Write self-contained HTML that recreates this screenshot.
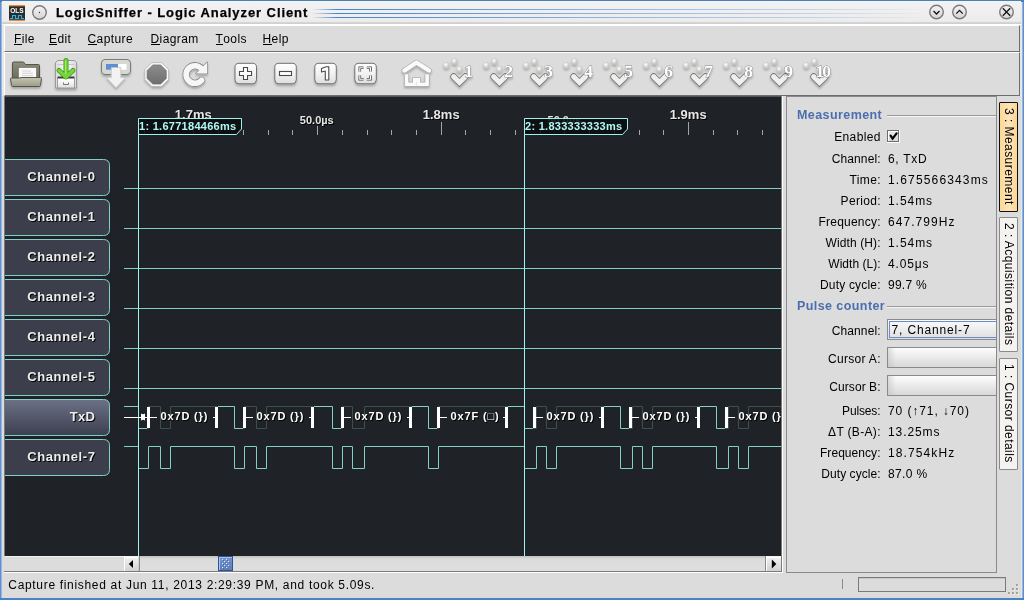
<!DOCTYPE html><html><head><meta charset="utf-8"><style>
*{margin:0;padding:0;box-sizing:border-box}
html,body{width:1024px;height:600px;overflow:hidden;background:#dcdcdc;font-family:"Liberation Sans",sans-serif;}
.a{position:absolute}
.t{position:absolute;white-space:nowrap;line-height:1}
svg text{font-family:"Liberation Sans",sans-serif}
#frame{left:0;top:0;width:1024px;height:600px;background:linear-gradient(to right,#4a7cc0 0,#a8c8ec 1.9px,#e8e8e8 2.2px,#e8e8e8 1021.6px,#a8c8ec 1022px,#4a7cc0 1024px)}
#fbot{left:0;top:598px;width:1024px;height:2px;background:#4a82c6}
#ftop{left:0;top:0;width:1024px;height:1.5px;background:#4a80b8}
#titlebar{left:2px;top:1px;width:1019px;height:24px;background:linear-gradient(#f2f2f2,#ececec 85%,#cfcfcf 91%,#cfcfcf 95.8%,#fff 96%)}
#menubar{left:4px;top:25px;width:1016px;height:27px;background:#dcdcdc;border-top:1px solid #fff;border-left:1px solid #fff;border-right:1px solid #6e6e6e;border-bottom:1px solid #6e6e6e}
#toolbar{left:4px;top:52px;width:1016px;height:44px;background:#dcdcdc;border-top:1px solid #fff;border-left:1px solid #fff;border-right:1px solid #6e6e6e;border-bottom:1px solid #6e6e6e}
#body{left:2px;top:96px;width:1019px;height:502px;background:#dcdcdc}
.menu{font-size:12px;color:#000;top:33px;letter-spacing:0.4px}
.menu u{text-decoration:none;display:inline-block;border-bottom:1px solid #000;line-height:10px;height:11px}
.plab{font-size:12px;color:#000;letter-spacing:0.3px}
.pval{font-size:12px;color:#000;letter-spacing:0.6px}

.cl{font:bold 13px "Liberation Sans",sans-serif;letter-spacing:0.6px}
.rl{font:bold 13px "Liberation Sans",sans-serif}
.rs{font:bold 11px "Liberation Sans",sans-serif}
.an{font:bold 11px "Liberation Sans",sans-serif;letter-spacing:0.85px}
.cu{font:bold 11px "Liberation Sans",sans-serif;letter-spacing:0.28px}
</style></head><body><div id="wrap" style="position:absolute;left:0;top:0;width:1024px;height:600px;will-change:transform">
<div id="frame" class="a"></div><div id="ftop" class="a"></div>
<div id="titlebar" class="a"></div>
<svg class="a" style="left:0;top:0" width="1024" height="25" viewBox="0 0 1024 25">
<defs><linearGradient id="btng" x1="0" y1="0" x2="0" y2="1"><stop offset="0" stop-color="#f4f4f4"/><stop offset="1" stop-color="#d4d4d4"/></linearGradient><linearGradient id="bl" x1="0" x2="1"><stop offset="0" stop-color="#3a7ed0" stop-opacity="0"/><stop offset="0.04" stop-color="#3a7ed0" stop-opacity="0.95"/><stop offset="0.5" stop-color="#3a7ed0" stop-opacity="0.5"/><stop offset="0.8" stop-color="#3a7ed0" stop-opacity="0.25"/><stop offset="1" stop-color="#3a7ed0" stop-opacity="0"/></linearGradient></defs>
<rect x="9" y="5" width="16" height="16" fill="#2b2b2b"/>
<rect x="9" y="5" width="16" height="1.3" fill="#f08a30"/><rect x="9" y="19.7" width="16" height="1.3" fill="#f08a30"/>
<text x="17" y="13" text-anchor="middle" style="font:bold 6.5px 'Liberation Sans',sans-serif" fill="#fff">OLS</text>
<path d="M10,18.5 H12.5 V15.5 H15.5 V18.5 H18.5 V15.5 H21.5 V18.5 H24" stroke="#19b8f0" stroke-width="1.2" fill="none"/>
<circle cx="39.5" cy="12.5" r="7.6" fill="#fff" opacity="0.6"/><circle cx="39.5" cy="12.5" r="6.8" fill="url(#btng)" stroke="#7a7a7a" stroke-width="1.4"/>
<circle cx="39.5" cy="12.5" r="0.7" fill="#333"/>
<rect x="312" y="9.0" width="620" height="1" fill="url(#bl)"/>
<rect x="312" y="13.0" width="620" height="1" fill="url(#bl)"/>
<rect x="312" y="17.0" width="620" height="1" fill="url(#bl)"/>
<circle cx="936.5" cy="12" r="7.6" fill="#fff" opacity="0.6"/><circle cx="936.5" cy="12" r="6.8" fill="url(#btng)" stroke="#7a7a7a" stroke-width="1.4"/>
<circle cx="959.5" cy="12" r="7.6" fill="#fff" opacity="0.6"/><circle cx="959.5" cy="12" r="6.8" fill="url(#btng)" stroke="#7a7a7a" stroke-width="1.4"/>
<circle cx="1006.5" cy="12" r="7.6" fill="#fff" opacity="0.6"/><circle cx="1006.5" cy="12" r="6.8" fill="url(#btng)" stroke="#7a7a7a" stroke-width="1.4"/>
<path d="M933.5,11 L936.5,14 L939.5,11" stroke="#111" stroke-width="1.3" fill="none"/>
<path d="M956.3,13.6 L959.5,10.4 L962.7,13.6" stroke="#111" stroke-width="1.3" fill="none"/>
<path d="M1002.8,8.3 L1010.2,15.7 M1010.2,8.3 L1002.8,15.7" stroke="#111" stroke-width="1.3" fill="none"/>
</svg>
<div class="t" style="left:56px;top:6px;font-size:13px;font-weight:bold;letter-spacing:0.92px;color:#000;-webkit-text-stroke:0.25px #000">LogicSniffer - Logic Analyzer Client</div>
<div id="menubar" class="a"></div>
<div class="t menu" style="left:14px"><u>F</u>ile</div>
<div class="t menu" style="left:49px"><u>E</u>dit</div>
<div class="t menu" style="left:87.5px"><u>C</u>apture</div>
<div class="t menu" style="left:150.5px"><u>D</u>iagram</div>
<div class="t menu" style="left:215.5px"><u>T</u>ools</div>
<div class="t menu" style="left:262.5px"><u>H</u>elp</div>
<div id="toolbar" class="a"></div>
<svg class="a" style="left:0;top:52px" width="1024" height="44" viewBox="0 52 1024 44">
<defs>
<linearGradient id="fbk" x1="0" y1="0" x2="0" y2="1"><stop offset="0" stop-color="#8e8e7c"/><stop offset="1" stop-color="#6a6a5a"/></linearGradient>
<linearGradient id="ffr" x1="0" y1="0" x2="0" y2="1"><stop offset="0" stop-color="#c4c4b2"/><stop offset="1" stop-color="#9c9c88"/></linearGradient>
<linearGradient id="btn" x1="0" y1="0" x2="0" y2="1"><stop offset="0" stop-color="#ffffff"/><stop offset="0.5" stop-color="#f2f2f2"/><stop offset="1" stop-color="#dedede"/></linearGradient>
<linearGradient id="oct" x1="0" y1="0" x2="0" y2="1"><stop offset="0" stop-color="#8c8c8c"/><stop offset="1" stop-color="#6e6e6e"/></linearGradient>
<linearGradient id="cab" x1="0" y1="0" x2="1" y2="0"><stop offset="0" stop-color="#dadada"/><stop offset="0.5" stop-color="#fbfbfb"/><stop offset="1" stop-color="#d8d8d8"/></linearGradient>
<radialGradient id="dot" cx="0.4" cy="0.35" r="0.7"><stop offset="0" stop-color="#ffffff"/><stop offset="1" stop-color="#b8b8b2"/></radialGradient>
<filter id="sh" x="-20%" y="-20%" width="140%" height="160%"><feGaussianBlur in="SourceAlpha" stdDeviation="1"/><feOffset dy="1.5"/><feComponentTransfer><feFuncA type="linear" slope="0.25"/></feComponentTransfer><feMerge><feMergeNode/><feMergeNode in="SourceGraphic"/></feMerge></filter>
</defs>
<g filter="url(#sh)">
<path d="M12.5,63 Q12.5,62 13.5,62 H23.5 L25.5,64.5 H38.5 Q39.5,64.5 39.5,65.5 V80 H12.5 Z" fill="url(#fbk)" stroke="#55554a" stroke-width="1"/>
<rect x="18.5" y="67.5" width="18" height="11" fill="#fafafa" stroke="#6a6a60" stroke-width="0.6"/>
<path d="M22,71 H31 M22,73.3 H33 M22,75.6 H33" stroke="#c8c8c8" stroke-width="0.8"/>
<path d="M10.5,79 Q10.5,78 11.5,78 H20 L21,77.5 H40.5 Q41.5,77.5 41.5,78.5 L40.5,85.5 Q40.3,86.5 39.3,86.5 H12.7 Q11.7,86.5 11.5,85.5 Z" fill="url(#ffr)" stroke="#55554a" stroke-width="1"/>
</g>
<g filter="url(#sh)">
<path d="M57.5,60.5 H74.5 L76.5,62.5 V88 H55.5 V62.5 Z" fill="url(#cab)" stroke="#9a9a9a" stroke-width="1"/>
<path d="M57.5,64.5 H74.5 M57.5,72 H74.5" stroke="#c8c8c8" stroke-width="1"/>
<rect x="57.5" y="76.5" width="17" height="1.6" fill="#3a3a3a"/>
<rect x="57.5" y="78.5" width="17" height="9.5" fill="url(#btn)" stroke="#8a8a8a" stroke-width="0.8"/>
<path d="M63.5,82.5 V84.5 H68.5 V82.5" stroke="#777" stroke-width="1" fill="none"/>
<path d="M66,60.5 V75.5 M59,70.5 L66,77 L73,70.5" stroke="#3f9a15" stroke-width="5" stroke-linecap="round" stroke-linejoin="round" fill="none"/>
<path d="M66,60.5 V75.5 M59,70.5 L66,77 L73,70.5" stroke="#77d43a" stroke-width="3.4" stroke-linecap="round" stroke-linejoin="round" fill="none"/>
<path d="M65.6,61 V74" stroke="#b8f090" stroke-width="0.8"/>
</g>
<g filter="url(#sh)">
<rect x="101.5" y="59.5" width="29" height="15" rx="3.5" fill="#d6d8d2" stroke="#7a7a7a" stroke-width="1"/>
<rect x="106" y="64" width="20.5" height="5.8" fill="#fff"/>
<rect x="106" y="64" width="12" height="5.8" fill="#5d8fd2"/>
<path d="M111.3,67.5 H120.8 V77.5 H125.6 L116,87.7 L106.4,77.5 H111.3 Z" fill="#f2f2f2" stroke="#c4c4c4" stroke-width="0.8"/>
</g>
<g filter="url(#sh)">
<polygon points="168.53,79.40 161.60,86.33 151.80,86.33 144.87,79.40 144.87,69.60 151.80,62.67 161.60,62.67 168.53,69.60" fill="#fbfbfb" stroke="#b4b4b4" stroke-width="0.8"/>
<polygon points="166.31,78.48 160.68,84.11 152.72,84.11 147.09,78.48 147.09,70.52 152.72,64.89 160.68,64.89 166.31,70.52" fill="url(#oct)" stroke="#6a6a6a" stroke-width="0.6"/>
</g>
<g filter="url(#sh)">
<path d="M201.6,68.8 A8.8,8.8 0 1 0 201.6,80.2" stroke="#8a8a8a" stroke-width="7.2" fill="none" stroke-linecap="round"/>
<path d="M207.2,62.3 V73.5 H196 Z" fill="#8a8a8a" stroke="#8a8a8a" stroke-width="1.4" stroke-linejoin="round"/>
<path d="M201.6,68.8 A8.8,8.8 0 1 0 201.6,80.2" stroke="#f6f6f6" stroke-width="5.6" fill="none" stroke-linecap="round"/>
<path d="M207.2,62.3 V73.5 H196 Z" fill="#f6f6f6" stroke="none"/>
</g>
<g filter="url(#sh)">
<rect x="235.0" y="63.3" width="21.5" height="20.5" rx="4" fill="url(#btn)" stroke="#6e6e6e" stroke-width="1"/>
<path d="M243.5,67.5 H247.5 V71.5 H251.5 V75.5 H247.5 V79.5 H243.5 V75.5 H239.5 V71.5 H243.5 Z" fill="#fff" stroke="#4a4a4a" stroke-width="1.1"/>
<rect x="274.8" y="63.3" width="21.5" height="20.5" rx="4" fill="url(#btn)" stroke="#6e6e6e" stroke-width="1"/>
<rect x="279.5" y="71.5" width="12" height="4" fill="#fff" stroke="#4a4a4a" stroke-width="1.1"/>
<rect x="314.8" y="63.3" width="21.5" height="20.5" rx="4" fill="url(#btn)" stroke="#6e6e6e" stroke-width="1"/>
<path d="M321.5,68.5 L326.3,66.8 H328.8 V80 H325.3 V71 L321.5,72 Z" fill="#fff" stroke="#4a4a4a" stroke-width="1.1" stroke-linejoin="round"/>
<rect x="354.8" y="63.3" width="21.5" height="20.5" rx="4" fill="url(#btn)" stroke="#6e6e6e" stroke-width="1"/>
<path d="M359.8,71.5 V67.8 H363.5 M366.8,67.8 H370.5 V71.5 M370.5,75.5 V79.2 H366.8 M363.5,79.2 H359.8 V75.5" stroke="#4a4a4a" stroke-width="2.6" fill="none"/>
<path d="M359.8,71.5 V67.8 H363.5 M366.8,67.8 H370.5 V71.5 M370.5,75.5 V79.2 H366.8 M363.5,79.2 H359.8 V75.5" stroke="#fff" stroke-width="1.1" fill="none"/>
</g>
<g filter="url(#sh)">
<path d="M404.5,70.5 L416.4,62.5 L429,70.5" stroke="#a8a8a8" stroke-width="5.6" stroke-linecap="round" stroke-linejoin="round" fill="none"/>
<path d="M404.5,70.5 L416.4,62.5 L429,70.5" stroke="#fafafa" stroke-width="4.4" stroke-linecap="round" stroke-linejoin="round" fill="none"/>
<path d="M406.6,74.2 V84.2 H414.6 V79.8 H418.4 V84.2 H427.1 V74.2" stroke="#a0a0a0" stroke-width="4.8" fill="none" stroke-linejoin="miter"/>
<path d="M406.6,74.2 V84.2 H414.6 V79.8 H418.4 V84.2 H427.1 V74.2" stroke="#fafafa" stroke-width="3.6" fill="none" stroke-linejoin="miter"/>
</g>
<g filter="url(#sh)">
<circle cx="446.35" cy="65.35" r="3" fill="url(#dot)" stroke="#c8c8c0" stroke-width="0.5"/>
<circle cx="454.45" cy="61.4" r="3" fill="url(#dot)" stroke="#c8c8c0" stroke-width="0.5"/>
<circle cx="459.55" cy="69.3" r="3" fill="url(#dot)" stroke="#c8c8c0" stroke-width="0.5"/>
<path d="M453.6,76.6 L459.5,82.5 L465.4,76.6" stroke="#707070" stroke-width="6.6" stroke-linejoin="miter" stroke-linecap="round" fill="none"/>
<path d="M453.6,76.6 L459.5,82.5 L465.4,76.6" stroke="#efefef" stroke-width="5.1" stroke-linejoin="miter" stroke-linecap="round" fill="none"/>
<text x="467.7" y="77.3" text-anchor="middle" style="font:bold 17.5px 'Liberation Serif',serif;letter-spacing:-2px" fill="#fff" stroke="#8a8a8a" stroke-width="0.9" paint-order="stroke">1</text>
</g>
<g filter="url(#sh)">
<circle cx="486.35" cy="65.35" r="3" fill="url(#dot)" stroke="#c8c8c0" stroke-width="0.5"/>
<circle cx="494.45" cy="61.4" r="3" fill="url(#dot)" stroke="#c8c8c0" stroke-width="0.5"/>
<circle cx="499.55" cy="69.3" r="3" fill="url(#dot)" stroke="#c8c8c0" stroke-width="0.5"/>
<path d="M493.6,76.6 L499.5,82.5 L505.4,76.6" stroke="#707070" stroke-width="6.6" stroke-linejoin="miter" stroke-linecap="round" fill="none"/>
<path d="M493.6,76.6 L499.5,82.5 L505.4,76.6" stroke="#efefef" stroke-width="5.1" stroke-linejoin="miter" stroke-linecap="round" fill="none"/>
<text x="507.7" y="77.3" text-anchor="middle" style="font:bold 17.5px 'Liberation Serif',serif;letter-spacing:-2px" fill="#fff" stroke="#8a8a8a" stroke-width="0.9" paint-order="stroke">2</text>
</g>
<g filter="url(#sh)">
<circle cx="526.35" cy="65.35" r="3" fill="url(#dot)" stroke="#c8c8c0" stroke-width="0.5"/>
<circle cx="534.45" cy="61.4" r="3" fill="url(#dot)" stroke="#c8c8c0" stroke-width="0.5"/>
<circle cx="539.55" cy="69.3" r="3" fill="url(#dot)" stroke="#c8c8c0" stroke-width="0.5"/>
<path d="M533.6,76.6 L539.5,82.5 L545.4,76.6" stroke="#707070" stroke-width="6.6" stroke-linejoin="miter" stroke-linecap="round" fill="none"/>
<path d="M533.6,76.6 L539.5,82.5 L545.4,76.6" stroke="#efefef" stroke-width="5.1" stroke-linejoin="miter" stroke-linecap="round" fill="none"/>
<text x="547.7" y="77.3" text-anchor="middle" style="font:bold 17.5px 'Liberation Serif',serif;letter-spacing:-2px" fill="#fff" stroke="#8a8a8a" stroke-width="0.9" paint-order="stroke">3</text>
</g>
<g filter="url(#sh)">
<circle cx="566.35" cy="65.35" r="3" fill="url(#dot)" stroke="#c8c8c0" stroke-width="0.5"/>
<circle cx="574.45" cy="61.4" r="3" fill="url(#dot)" stroke="#c8c8c0" stroke-width="0.5"/>
<circle cx="579.55" cy="69.3" r="3" fill="url(#dot)" stroke="#c8c8c0" stroke-width="0.5"/>
<path d="M573.6,76.6 L579.5,82.5 L585.4,76.6" stroke="#707070" stroke-width="6.6" stroke-linejoin="miter" stroke-linecap="round" fill="none"/>
<path d="M573.6,76.6 L579.5,82.5 L585.4,76.6" stroke="#efefef" stroke-width="5.1" stroke-linejoin="miter" stroke-linecap="round" fill="none"/>
<text x="587.7" y="77.3" text-anchor="middle" style="font:bold 17.5px 'Liberation Serif',serif;letter-spacing:-2px" fill="#fff" stroke="#8a8a8a" stroke-width="0.9" paint-order="stroke">4</text>
</g>
<g filter="url(#sh)">
<circle cx="606.35" cy="65.35" r="3" fill="url(#dot)" stroke="#c8c8c0" stroke-width="0.5"/>
<circle cx="614.45" cy="61.4" r="3" fill="url(#dot)" stroke="#c8c8c0" stroke-width="0.5"/>
<circle cx="619.55" cy="69.3" r="3" fill="url(#dot)" stroke="#c8c8c0" stroke-width="0.5"/>
<path d="M613.6,76.6 L619.5,82.5 L625.4,76.6" stroke="#707070" stroke-width="6.6" stroke-linejoin="miter" stroke-linecap="round" fill="none"/>
<path d="M613.6,76.6 L619.5,82.5 L625.4,76.6" stroke="#efefef" stroke-width="5.1" stroke-linejoin="miter" stroke-linecap="round" fill="none"/>
<text x="627.7" y="77.3" text-anchor="middle" style="font:bold 17.5px 'Liberation Serif',serif;letter-spacing:-2px" fill="#fff" stroke="#8a8a8a" stroke-width="0.9" paint-order="stroke">5</text>
</g>
<g filter="url(#sh)">
<circle cx="646.35" cy="65.35" r="3" fill="url(#dot)" stroke="#c8c8c0" stroke-width="0.5"/>
<circle cx="654.45" cy="61.4" r="3" fill="url(#dot)" stroke="#c8c8c0" stroke-width="0.5"/>
<circle cx="659.55" cy="69.3" r="3" fill="url(#dot)" stroke="#c8c8c0" stroke-width="0.5"/>
<path d="M653.6,76.6 L659.5,82.5 L665.4,76.6" stroke="#707070" stroke-width="6.6" stroke-linejoin="miter" stroke-linecap="round" fill="none"/>
<path d="M653.6,76.6 L659.5,82.5 L665.4,76.6" stroke="#efefef" stroke-width="5.1" stroke-linejoin="miter" stroke-linecap="round" fill="none"/>
<text x="667.7" y="77.3" text-anchor="middle" style="font:bold 17.5px 'Liberation Serif',serif;letter-spacing:-2px" fill="#fff" stroke="#8a8a8a" stroke-width="0.9" paint-order="stroke">6</text>
</g>
<g filter="url(#sh)">
<circle cx="686.35" cy="65.35" r="3" fill="url(#dot)" stroke="#c8c8c0" stroke-width="0.5"/>
<circle cx="694.45" cy="61.4" r="3" fill="url(#dot)" stroke="#c8c8c0" stroke-width="0.5"/>
<circle cx="699.55" cy="69.3" r="3" fill="url(#dot)" stroke="#c8c8c0" stroke-width="0.5"/>
<path d="M693.6,76.6 L699.5,82.5 L705.4,76.6" stroke="#707070" stroke-width="6.6" stroke-linejoin="miter" stroke-linecap="round" fill="none"/>
<path d="M693.6,76.6 L699.5,82.5 L705.4,76.6" stroke="#efefef" stroke-width="5.1" stroke-linejoin="miter" stroke-linecap="round" fill="none"/>
<text x="707.7" y="77.3" text-anchor="middle" style="font:bold 17.5px 'Liberation Serif',serif;letter-spacing:-2px" fill="#fff" stroke="#8a8a8a" stroke-width="0.9" paint-order="stroke">7</text>
</g>
<g filter="url(#sh)">
<circle cx="726.35" cy="65.35" r="3" fill="url(#dot)" stroke="#c8c8c0" stroke-width="0.5"/>
<circle cx="734.45" cy="61.4" r="3" fill="url(#dot)" stroke="#c8c8c0" stroke-width="0.5"/>
<circle cx="739.55" cy="69.3" r="3" fill="url(#dot)" stroke="#c8c8c0" stroke-width="0.5"/>
<path d="M733.6,76.6 L739.5,82.5 L745.4,76.6" stroke="#707070" stroke-width="6.6" stroke-linejoin="miter" stroke-linecap="round" fill="none"/>
<path d="M733.6,76.6 L739.5,82.5 L745.4,76.6" stroke="#efefef" stroke-width="5.1" stroke-linejoin="miter" stroke-linecap="round" fill="none"/>
<text x="747.7" y="77.3" text-anchor="middle" style="font:bold 17.5px 'Liberation Serif',serif;letter-spacing:-2px" fill="#fff" stroke="#8a8a8a" stroke-width="0.9" paint-order="stroke">8</text>
</g>
<g filter="url(#sh)">
<circle cx="766.35" cy="65.35" r="3" fill="url(#dot)" stroke="#c8c8c0" stroke-width="0.5"/>
<circle cx="774.45" cy="61.4" r="3" fill="url(#dot)" stroke="#c8c8c0" stroke-width="0.5"/>
<circle cx="779.55" cy="69.3" r="3" fill="url(#dot)" stroke="#c8c8c0" stroke-width="0.5"/>
<path d="M773.6,76.6 L779.5,82.5 L785.4,76.6" stroke="#707070" stroke-width="6.6" stroke-linejoin="miter" stroke-linecap="round" fill="none"/>
<path d="M773.6,76.6 L779.5,82.5 L785.4,76.6" stroke="#efefef" stroke-width="5.1" stroke-linejoin="miter" stroke-linecap="round" fill="none"/>
<text x="787.7" y="77.3" text-anchor="middle" style="font:bold 17.5px 'Liberation Serif',serif;letter-spacing:-2px" fill="#fff" stroke="#8a8a8a" stroke-width="0.9" paint-order="stroke">9</text>
</g>
<g filter="url(#sh)">
<circle cx="806.35" cy="65.35" r="3" fill="url(#dot)" stroke="#c8c8c0" stroke-width="0.5"/>
<circle cx="814.45" cy="61.4" r="3" fill="url(#dot)" stroke="#c8c8c0" stroke-width="0.5"/>
<circle cx="819.55" cy="69.3" r="3" fill="url(#dot)" stroke="#c8c8c0" stroke-width="0.5"/>
<path d="M813.6,76.6 L819.5,82.5 L825.4,76.6" stroke="#707070" stroke-width="6.6" stroke-linejoin="miter" stroke-linecap="round" fill="none"/>
<path d="M813.6,76.6 L819.5,82.5 L825.4,76.6" stroke="#efefef" stroke-width="5.1" stroke-linejoin="miter" stroke-linecap="round" fill="none"/>
<text x="822.2" y="77.3" text-anchor="middle" style="font:bold 17.5px 'Liberation Serif',serif;letter-spacing:-2px" fill="#fff" stroke="#8a8a8a" stroke-width="0.9" paint-order="stroke">10</text>
</g>
</svg>
<div id="body" class="a"></div>
<div class="a" style="left:4px;top:96px;width:778px;height:1px;background:#555"></div>
<div class="a" style="left:4px;top:96px;width:1px;height:476px;background:#7a7a7a"></div>
<svg class="a" style="left:5px;top:97px" width="776" height="459" viewBox="5 97 776 459">
<defs><linearGradient id="selg" x1="0" y1="0" x2="0" y2="1"><stop offset="0" stop-color="#6c7186"/><stop offset="1" stop-color="#3c3f4e"/></linearGradient><clipPath id="bright"><rect x="100" y="390" width="47" height="50"/><rect x="218" y="390" width="25" height="50"/><rect x="314" y="390" width="27" height="50"/><rect x="412" y="390" width="25" height="50"/><rect x="508" y="390" width="25" height="50"/><rect x="604" y="390" width="25" height="50"/><rect x="700" y="390" width="25" height="50"/></clipPath></defs>
<rect x="5" y="97" width="776" height="459" fill="#1f2226"/>
<path d="M144.5,130 V135 M169.5,130 V135 M193.5,122 V135 M218.5,130 V135 M243.5,130 V135 M268.5,130 V135 M292.5,130 V135 M317.5,126 V135 M342.5,130 V135 M367.5,130 V135 M391.5,130 V135 M416.5,130 V135 M441.5,122 V135 M465.5,130 V135 M490.5,130 V135 M515.5,130 V135 M540.5,130 V135 M564.5,126 V135 M589.5,130 V135 M614.5,130 V135 M639.5,130 V135 M663.5,130 V135 M688.5,122 V135 M713.5,130 V135 M737.5,130 V135 M762.5,130 V135" stroke="#a4a4a4" stroke-width="1" fill="none"/>
<text x="194.3" y="119.5" text-anchor="middle" class="rl" fill="#000">1.7ms</text>
<text x="193.3" y="118.5" text-anchor="middle" class="rl" fill="#e6e6e6">1.7ms</text>
<text x="442.2" y="119.5" text-anchor="middle" class="rl" fill="#000">1.8ms</text>
<text x="441.2" y="118.5" text-anchor="middle" class="rl" fill="#e6e6e6">1.8ms</text>
<text x="689.2" y="119.5" text-anchor="middle" class="rl" fill="#000">1.9ms</text>
<text x="688.2" y="118.5" text-anchor="middle" class="rl" fill="#e6e6e6">1.9ms</text>
<text x="317.8" y="124.7" text-anchor="middle" class="rs" fill="#000">50.0µs</text>
<text x="316.8" y="123.7" text-anchor="middle" class="rs" fill="#e6e6e6">50.0µs</text>
<text x="565.5" y="124.7" text-anchor="middle" class="rs" fill="#000">50.0µs</text>
<text x="564.5" y="123.7" text-anchor="middle" class="rs" fill="#e6e6e6">50.0µs</text>
<path d="M-2,159.5 H103.5 Q109.5,159.5 109.5,165.5 V189.5 Q109.5,195.5 103.5,195.5 H-2 Z" fill="#3c3e4b" stroke="#7fd0c6" stroke-width="1"/><text x="96.5" y="182" text-anchor="end" class="cl" fill="#000">Channel-0</text><text x="95.5" y="181" text-anchor="end" class="cl" fill="#eeeeee">Channel-0</text>
<path d="M-2,199.5 H103.5 Q109.5,199.5 109.5,205.5 V229.5 Q109.5,235.5 103.5,235.5 H-2 Z" fill="#3c3e4b" stroke="#7fd0c6" stroke-width="1"/><text x="96.5" y="222" text-anchor="end" class="cl" fill="#000">Channel-1</text><text x="95.5" y="221" text-anchor="end" class="cl" fill="#eeeeee">Channel-1</text>
<path d="M-2,239.5 H103.5 Q109.5,239.5 109.5,245.5 V269.5 Q109.5,275.5 103.5,275.5 H-2 Z" fill="#3c3e4b" stroke="#7fd0c6" stroke-width="1"/><text x="96.5" y="262" text-anchor="end" class="cl" fill="#000">Channel-2</text><text x="95.5" y="261" text-anchor="end" class="cl" fill="#eeeeee">Channel-2</text>
<path d="M-2,279.5 H103.5 Q109.5,279.5 109.5,285.5 V309.5 Q109.5,315.5 103.5,315.5 H-2 Z" fill="#3c3e4b" stroke="#7fd0c6" stroke-width="1"/><text x="96.5" y="302" text-anchor="end" class="cl" fill="#000">Channel-3</text><text x="95.5" y="301" text-anchor="end" class="cl" fill="#eeeeee">Channel-3</text>
<path d="M-2,319.5 H103.5 Q109.5,319.5 109.5,325.5 V349.5 Q109.5,355.5 103.5,355.5 H-2 Z" fill="#3c3e4b" stroke="#7fd0c6" stroke-width="1"/><text x="96.5" y="342" text-anchor="end" class="cl" fill="#000">Channel-4</text><text x="95.5" y="341" text-anchor="end" class="cl" fill="#eeeeee">Channel-4</text>
<path d="M-2,359.5 H103.5 Q109.5,359.5 109.5,365.5 V389.5 Q109.5,395.5 103.5,395.5 H-2 Z" fill="#3c3e4b" stroke="#7fd0c6" stroke-width="1"/><text x="96.5" y="382" text-anchor="end" class="cl" fill="#000">Channel-5</text><text x="95.5" y="381" text-anchor="end" class="cl" fill="#eeeeee">Channel-5</text>
<path d="M-2,399.5 H103.5 Q109.5,399.5 109.5,405.5 V429.5 Q109.5,435.5 103.5,435.5 H-2 Z" fill="url(#selg)" stroke="#7fd0c6" stroke-width="1"/><text x="96" y="422" text-anchor="end" class="cl" fill="#000" style="letter-spacing:0.2px">TxD</text><text x="95" y="421" text-anchor="end" class="cl" fill="#eeeeee" style="letter-spacing:0.2px">TxD</text>
<path d="M-2,439.5 H103.5 Q109.5,439.5 109.5,445.5 V469.5 Q109.5,475.5 103.5,475.5 H-2 Z" fill="#3c3e4b" stroke="#7fd0c6" stroke-width="1"/><text x="96.5" y="462" text-anchor="end" class="cl" fill="#000">Channel-7</text><text x="95.5" y="461" text-anchor="end" class="cl" fill="#eeeeee">Channel-7</text>
<path d="M124,188.5 H781" stroke="#7fd0c6" stroke-width="1"/>
<path d="M124,228.5 H781" stroke="#7fd0c6" stroke-width="1"/>
<path d="M124,268.5 H781" stroke="#7fd0c6" stroke-width="1"/>
<path d="M124,308.5 H781" stroke="#7fd0c6" stroke-width="1"/>
<path d="M124,348.5 H781" stroke="#7fd0c6" stroke-width="1"/>
<path d="M124,388.5 H781" stroke="#7fd0c6" stroke-width="1"/>
<path d="M124,446.5 H138.5 V468.5 H148.5 V446.5 H160.5 V468.5 H170.5 V446.5 H234.5 V468.5 H244.5 V446.5 H256.5 V468.5 H266.5 V446.5 H332.5 V468.5 H342.5 V446.5 H352.5 V468.5 H364.5 V446.5 H428.5 V468.5 H438.5 V446.5 H524.5 V468.5 H536.5 V446.5 H546.5 V468.5 H556.5 V446.5 H620.5 V468.5 H632.5 V446.5 H642.5 V468.5 H652.5 V446.5 H716.5 V468.5 H728.5 V446.5 H738.5 V468.5 H748.5 V446.5 H781" stroke="#7fd0c6" fill="none" stroke-width="1"/>
<path d="M124,406.5 H138.5 V428.5 H148.5 V406.5 H160.5 V428.5 H170.5 V406.5 H234.5 V428.5 H244.5 V406.5 H256.5 V428.5 H266.5 V406.5 H332.5 V428.5 H342.5 V406.5 H352.5 V428.5 H364.5 V406.5 H428.5 V428.5 H438.5 V406.5 H524.5 V428.5 H536.5 V406.5 H546.5 V428.5 H556.5 V406.5 H620.5 V428.5 H632.5 V406.5 H642.5 V428.5 H652.5 V406.5 H716.5 V428.5 H728.5 V406.5 H738.5 V428.5 H748.5 V406.5 H781" stroke="#3b504d" fill="none" stroke-width="1"/>
<path d="M124,406.5 H138.5 V428.5 H148.5 V406.5 H160.5 V428.5 H170.5 V406.5 H234.5 V428.5 H244.5 V406.5 H256.5 V428.5 H266.5 V406.5 H332.5 V428.5 H342.5 V406.5 H352.5 V428.5 H364.5 V406.5 H428.5 V428.5 H438.5 V406.5 H524.5 V428.5 H536.5 V406.5 H546.5 V428.5 H556.5 V406.5 H620.5 V428.5 H632.5 V406.5 H642.5 V428.5 H652.5 V406.5 H716.5 V428.5 H728.5 V406.5 H738.5 V428.5 H748.5 V406.5 H781" stroke="#7fd0c6" fill="none" stroke-width="1" clip-path="url(#bright)"/>
<rect x="147" y="407" width="3" height="21" fill="#fff"/>
<rect x="150" y="417" width="7" height="1" fill="#fff"/>
<rect x="243" y="407" width="3" height="21" fill="#fff"/>
<rect x="246" y="417" width="7" height="1" fill="#fff"/>
<rect x="341" y="407" width="3" height="21" fill="#fff"/>
<rect x="344" y="417" width="7" height="1" fill="#fff"/>
<rect x="437" y="407" width="3" height="21" fill="#fff"/>
<rect x="440" y="417" width="7" height="1" fill="#fff"/>
<rect x="533" y="407" width="3" height="21" fill="#fff"/>
<rect x="536" y="417" width="7" height="1" fill="#fff"/>
<rect x="629" y="407" width="3" height="21" fill="#fff"/>
<rect x="632" y="417" width="7" height="1" fill="#fff"/>
<rect x="725" y="407" width="3" height="21" fill="#fff"/>
<rect x="728" y="417" width="7" height="1" fill="#fff"/>
<rect x="215" y="407" width="3" height="21" fill="#fff"/>
<rect x="213" y="417" width="2" height="1" fill="#fff"/>
<rect x="311" y="407" width="3" height="21" fill="#fff"/>
<rect x="309" y="417" width="2" height="1" fill="#fff"/>
<rect x="409" y="407" width="3" height="21" fill="#fff"/>
<rect x="407" y="417" width="2" height="1" fill="#fff"/>
<rect x="505" y="407" width="3" height="21" fill="#fff"/>
<rect x="503" y="417" width="2" height="1" fill="#fff"/>
<rect x="601" y="407" width="3" height="21" fill="#fff"/>
<rect x="599" y="417" width="2" height="1" fill="#fff"/>
<rect x="697" y="407" width="3" height="21" fill="#fff"/>
<rect x="695" y="417" width="2" height="1" fill="#fff"/>
<text x="161.5" y="421" class="an" fill="#000">0x7D (})</text>
<text x="160.5" y="420" class="an" fill="#fff">0x7D (})</text>
<text x="257.5" y="421" class="an" fill="#000">0x7D (})</text>
<text x="256.5" y="420" class="an" fill="#fff">0x7D (})</text>
<text x="355.5" y="421" class="an" fill="#000">0x7D (})</text>
<text x="354.5" y="420" class="an" fill="#fff">0x7D (})</text>
<text x="451.5" y="421" class="an" fill="#000">0x7F (□)</text>
<text x="450.5" y="420" class="an" fill="#fff">0x7F (□)</text>
<text x="547.5" y="421" class="an" fill="#000">0x7D (})</text>
<text x="546.5" y="420" class="an" fill="#fff">0x7D (})</text>
<text x="643.5" y="421" class="an" fill="#000">0x7D (})</text>
<text x="642.5" y="420" class="an" fill="#fff">0x7D (})</text>
<text x="739.5" y="421" class="an" fill="#000">0x7D (})</text>
<text x="738.5" y="420" class="an" fill="#fff">0x7D (})</text>
<path d="M138.5,134 V556 M524.5,134 V556" stroke="#9ff2f0" stroke-width="1"/>
<path d="M138.5,118.5 H241.5 V129 L236.5,134.5 H138.5 Z" fill="#0c0d0f" fill-opacity="0.88" stroke="#9ff2f0" stroke-width="1"/>
<text x="139.0" y="129.5" class="cu" fill="#aef8f6">1: 1.677184466ms</text>
<path d="M524.5,118.5 H627.5 V129 L622.5,134.5 H524.5 Z" fill="#0c0d0f" fill-opacity="0.88" stroke="#9ff2f0" stroke-width="1"/>
<text x="525.0" y="129.5" class="cu" fill="#aef8f6">2: 1.833333333ms</text>
<rect x="124" y="417" width="23" height="1" fill="#fff"/>
<path d="M141,413.5 Q143,415 145,413.5 V420.5 Q143,419 141,420.5 Z" fill="#fff"/>
</svg>
<div class="a" style="left:781px;top:96px;width:1px;height:476px;background:#7a7a7a"></div>
<div class="a" style="left:782px;top:96px;width:1px;height:477px;background:#fff"></div>
<svg class="a" style="left:4px;top:556px" width="780" height="18" viewBox="4 556 780 18">
<defs><linearGradient id="sbg" x1="0" y1="0" x2="0" y2="1"><stop offset="0" stop-color="#f4f4f4"/><stop offset="1" stop-color="#d2d2d2"/></linearGradient><linearGradient id="trk" x1="0" y1="0" x2="0" y2="1"><stop offset="0" stop-color="#c0c0c0"/><stop offset="0.2" stop-color="#dcdcdc"/><stop offset="1" stop-color="#dedede"/></linearGradient><linearGradient id="thg" x1="0" y1="0" x2="0" y2="1"><stop offset="0" stop-color="#7894cc"/><stop offset="1" stop-color="#5e7cb8"/></linearGradient></defs>
<rect x="4" y="556" width="778" height="17" fill="#dcdcdc"/>
<rect x="5" y="556" width="119" height="1" fill="#f0f0f0"/>
<rect x="124" y="556" width="15.5" height="15" fill="url(#sbg)"/><path d="M124.5,556 V571 M124,557.5 H139" stroke="#fff"/><path d="M139.5,556 V571" stroke="#8a8a8a" stroke-width="1.4"/>
<path d="M128.8,564 L133,560 V568 Z" fill="#000"/>
<rect x="140" y="556" width="626" height="15" fill="url(#trk)"/>
<rect x="218.5" y="556.5" width="14" height="14" fill="url(#thg)" stroke="#2f509a"/>
<path d="M219.5,570 V557.5 H232" stroke="#a9c6f2" fill="none"/>
<rect x="222.8" y="559.8" width="1" height="1" fill="#2e4f98"/><rect x="222" y="559" width="1.2" height="1.2" fill="#dce8fb"/>
<rect x="226.8" y="559.8" width="1" height="1" fill="#2e4f98"/><rect x="226" y="559" width="1.2" height="1.2" fill="#dce8fb"/>
<rect x="224.8" y="561.8" width="1" height="1" fill="#2e4f98"/><rect x="224" y="561" width="1.2" height="1.2" fill="#dce8fb"/>
<rect x="228.8" y="561.8" width="1" height="1" fill="#2e4f98"/><rect x="228" y="561" width="1.2" height="1.2" fill="#dce8fb"/>
<rect x="222.8" y="563.8" width="1" height="1" fill="#2e4f98"/><rect x="222" y="563" width="1.2" height="1.2" fill="#dce8fb"/>
<rect x="226.8" y="563.8" width="1" height="1" fill="#2e4f98"/><rect x="226" y="563" width="1.2" height="1.2" fill="#dce8fb"/>
<rect x="224.8" y="565.8" width="1" height="1" fill="#2e4f98"/><rect x="224" y="565" width="1.2" height="1.2" fill="#dce8fb"/>
<rect x="228.8" y="565.8" width="1" height="1" fill="#2e4f98"/><rect x="228" y="565" width="1.2" height="1.2" fill="#dce8fb"/>
<rect x="222.8" y="567.8" width="1" height="1" fill="#2e4f98"/><rect x="222" y="567" width="1.2" height="1.2" fill="#dce8fb"/>
<rect x="226.8" y="567.8" width="1" height="1" fill="#2e4f98"/><rect x="226" y="567" width="1.2" height="1.2" fill="#dce8fb"/>
<rect x="766" y="556" width="15" height="15" fill="url(#sbg)"/><path d="M766.5,556 V571 M766,557.5 H781" stroke="#fff"/><path d="M765.5,556 V571" stroke="#8a8a8a"/>
<path d="M776.3,564 L771.8,559.6 V568.4 Z" fill="#000"/>
<path d="M781.5,556 V572 M4,571.5 H782" stroke="#7a7a7a"/>
<path d="M782.5,556 V573 M4,572.5 H783" stroke="#fff"/>
</svg>
<div class="a" style="left:786px;top:96px;width:211px;height:477px;border-left:1px solid #8a8a8a;border-top:1px solid #8a8a8a;border-right:1px solid #8a8a8a;border-bottom:1px solid #8a8a8a;background:#dcdcdc"></div>
<div class="t" style="left:797px;top:108.5px;font-size:12.5px;font-weight:bold;color:#4b6eaf;letter-spacing:0.42px">Measurement</div><div class="a" style="left:887px;top:114.5px;width:109px;height:1px;background:#9a9a9a"></div><div class="a" style="left:887px;top:115.5px;width:109px;height:1px;background:#f4f4f4"></div>
<div class="t" style="left:797px;top:299.5px;font-size:12.5px;font-weight:bold;color:#4b6eaf;letter-spacing:0.42px">Pulse counter</div><div class="a" style="left:887px;top:305.5px;width:109px;height:1px;background:#9a9a9a"></div><div class="a" style="left:887px;top:306.5px;width:109px;height:1px;background:#f4f4f4"></div>
<div class="t plab" style="right:143.12px;top:130.7px;letter-spacing:0.383px">Enabled</div>
<div class="t plab" style="right:143.41px;top:152.5px;letter-spacing:0.093px">Channel:</div>
<div class="t pval" style="left:888px;top:152.5px;letter-spacing:0.7px">6, TxD</div>
<div class="t plab" style="right:143.12px;top:173.5px;letter-spacing:0.375px">Time:</div>
<div class="t pval" style="left:888px;top:173.5px;letter-spacing:1.146px">1.675566343ms</div>
<div class="t plab" style="right:143.18px;top:194.5px;letter-spacing:0.317px">Period:</div>
<div class="t pval" style="left:888px;top:194.5px;letter-spacing:0.95px">1.54ms</div>
<div class="t plab" style="right:143.28px;top:215.5px;letter-spacing:0.222px">Frequency:</div>
<div class="t pval" style="left:888px;top:215.5px;letter-spacing:1.062px">647.799Hz</div>
<div class="t plab" style="right:143.39px;top:236.5px;letter-spacing:0.111px">Width (H):</div>
<div class="t pval" style="left:888px;top:236.5px;letter-spacing:0.95px">1.54ms</div>
<div class="t plab" style="right:143.48px;top:257.5px;letter-spacing:0.022px">Width (L):</div>
<div class="t pval" style="left:888px;top:257.5px;letter-spacing:0.85px">4.05μs</div>
<div class="t plab" style="right:143.31px;top:278.5px;letter-spacing:0.19px">Duty cycle:</div>
<div class="t pval" style="left:888px;top:278.5px;letter-spacing:0.24px">99.7 %</div>
<div class="t plab" style="right:143.41px;top:324.5px;letter-spacing:0.093px">Channel:</div>
<div class="t plab" style="right:143.19px;top:352.5px;letter-spacing:0.312px">Cursor A:</div>
<div class="t plab" style="right:143.44px;top:380.5px;letter-spacing:0.062px">Cursor B:</div>
<div class="t plab" style="right:143.65px;top:404.5px;letter-spacing:-0.15px">Pulses:</div>
<div class="t pval" style="left:888px;top:404.5px;letter-spacing:0.908px">70 (↑71, ↓70)</div>
<div class="t plab" style="right:143.18px;top:425.5px;letter-spacing:0.325px">ΔT (B-A):</div>
<div class="t pval" style="left:888px;top:425.5px;letter-spacing:0.917px">13.25ms</div>
<div class="t plab" style="right:143.44px;top:446.5px;letter-spacing:0.056px">Frequency:</div>
<div class="t pval" style="left:888px;top:446.5px;letter-spacing:1.1px">18.754kHz</div>
<div class="t plab" style="right:143.45px;top:467.5px;letter-spacing:0.05px">Duty cycle:</div>
<div class="t pval" style="left:888px;top:467.5px;letter-spacing:0.36px">87.0 %</div>
<div class="a" style="left:887px;top:130px;width:13px;height:13px;border-right:1px solid #fff;border-bottom:1px solid #fff"></div>
<div class="a" style="left:887px;top:130px;width:12px;height:12px;border:1px solid #6e6e6e;background:linear-gradient(#e8e8e8,#d8d8d8);box-shadow:inset 1px 1px 0 #fff"></div>
<svg class="a" style="left:887px;top:130px" width="13" height="13" viewBox="0 0 13 13"><path d="M3.6,5.6 L5.6,8.7 L9.6,3.4" stroke="#000" stroke-width="2.2" fill="none" stroke-linecap="round"/></svg>
<div class="a" style="left:887px;top:319px;width:109px;height:21px;border:1px solid #8a8a8a;border-right:none;background:linear-gradient(#fbfbfb,#dedede)"></div>
<div class="a" style="left:889px;top:321px;width:107px;height:17px;border:1px solid #6a8ccc;border-right:none"></div>
<div class="t pval" style="left:891.5px;top:324px;letter-spacing:0.85px">7, Channel-7</div>
<div class="a" style="left:887px;top:347px;width:109px;height:21px;border:1px solid #8a8a8a;border-right:none;background:linear-gradient(#fdfdfd,#d8d8d8)"></div>
<div class="a" style="left:888px;top:348px;width:8px;height:19px;background:linear-gradient(to right,rgba(190,190,190,0.5),rgba(255,255,255,0))"></div>
<div class="a" style="left:887px;top:375px;width:109px;height:21px;border:1px solid #8a8a8a;border-right:none;background:linear-gradient(#fdfdfd,#d8d8d8)"></div>
<div class="a" style="left:888px;top:376px;width:8px;height:19px;background:linear-gradient(to right,rgba(190,190,190,0.5),rgba(255,255,255,0))"></div>
<div class="a" style="left:996px;top:96px;width:1px;height:477px;background:#8a8a8a"></div>
<div class="a" style="left:999px;top:102px;width:19px;height:110px;border:1px solid #111;border-radius:1px;background:linear-gradient(to right,#fcd898,#fde4b8 55%,#fbd594)"></div>
<div class="t" style="left:1002.5px;top:108px;font-size:12px;color:#000;writing-mode:vertical-rl;letter-spacing:0.45px">3 : Measurement</div>
<div class="a" style="left:999px;top:217px;width:19px;height:135px;border:1px solid #8a8a8a;border-radius:1px;background:#f5f3ef"></div>
<div class="t" style="left:1002.5px;top:223px;font-size:12px;color:#000;writing-mode:vertical-rl;letter-spacing:0.45px">2 : Acquisition details</div>
<div class="a" style="left:999px;top:358px;width:19px;height:112px;border:1px solid #8a8a8a;border-radius:1px;background:#f5f3ef"></div>
<div class="t" style="left:1002.5px;top:364px;font-size:12px;color:#000;writing-mode:vertical-rl;letter-spacing:0.45px">1 : Cursor details</div>
<div class="t" style="left:8.3px;top:579px;font-size:12px;letter-spacing:0.68px;color:#000">Capture finished at Jun 11, 2013 2:29:39 PM, and took 5.09s.</div>
<div class="a" style="left:842px;top:579px;width:1px;height:10px;background:#8a8a8a"></div>
<div class="a" style="left:858px;top:577px;width:148px;height:15px;border:1px solid #7a7a7a;background:#dcdcdc"></div>
<div class="a" style="left:859px;top:578px;width:146px;height:1px;background:#c8c8c8"></div>
<svg class="a" style="left:0;top:0" width="1024" height="600" viewBox="0 0 1024 600"><rect x="1017" y="585" width="1.5" height="1.5" fill="#fff"/><rect x="1016" y="584" width="2" height="2" fill="#a8a290"/><rect x="1013" y="589" width="1.5" height="1.5" fill="#fff"/><rect x="1012" y="588" width="2" height="2" fill="#a8a290"/><rect x="1017" y="589" width="1.5" height="1.5" fill="#fff"/><rect x="1016" y="588" width="2" height="2" fill="#a8a290"/><rect x="1009" y="593" width="1.5" height="1.5" fill="#fff"/><rect x="1008" y="592" width="2" height="2" fill="#a8a290"/><rect x="1013" y="593" width="1.5" height="1.5" fill="#fff"/><rect x="1012" y="592" width="2" height="2" fill="#a8a290"/><rect x="1017" y="593" width="1.5" height="1.5" fill="#fff"/><rect x="1016" y="592" width="2" height="2" fill="#a8a290"/></svg>
<div id="fbot" class="a"></div>
</div></body></html>
